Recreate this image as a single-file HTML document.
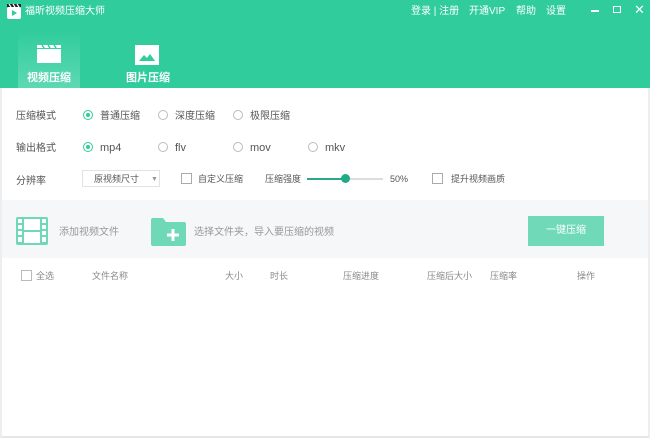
<!DOCTYPE html>
<html><head><meta charset="utf-8"><style>
*{margin:0;padding:0;box-sizing:border-box}
body{width:650px;height:438px;overflow:hidden;background:#fff;font-family:"Liberation Sans","Noto Sans CJK SC",sans-serif;font-size:10px;color:#555;position:relative}
.top{position:absolute;left:0;top:0;width:650px;height:88px;background:#30cc9b}
.a{position:absolute;white-space:nowrap;line-height:1}
.w{color:#fff}
.tab{position:absolute;top:30px;width:62px;height:58px}
.radio{position:absolute;width:10px;height:10px;border:1px solid #bbb;border-radius:50%}
.radio.on{border-color:#30cc9b}
.radio.on::after{content:"";position:absolute;left:2px;top:2px;width:4px;height:4px;border-radius:50%;background:#30cc9b}
.cb{position:absolute;width:11px;height:11px;border:1px solid #aaa;background:#fff}
.frame{position:absolute;left:0;top:88px;width:650px;height:350px;border-left:2px solid #eee;border-right:2px solid #eee;border-bottom:2px solid #e6e6e6}
</style></head><body>
<div class="top"></div>
<div class="frame"></div>
<svg class="a" style="left:6px;top:3px" width="16" height="16" viewBox="0 0 16 16"><rect x="1" y="4" width="14" height="12" rx="2" fill="#fff"/><rect x="1" y="1" width="14" height="3" fill="#222"/><path d="M3 1l2 3M7 1l2 3M11 1l2 3" stroke="#fff" stroke-width="1.2"/><path d="M6 7l5 3-5 3z" fill="#30cc9b"/></svg>
<div class="a w" style="left:25px;top:7px;font-size:10px">福昕视频压缩大师</div>
<div class="a w" style="left:411px;top:7px;font-size:10px">登录 | 注册</div>
<div class="a w" style="left:469px;top:7px;font-size:10px">开通VIP</div>
<div class="a w" style="left:516px;top:7px;font-size:10px">帮助</div>
<div class="a w" style="left:546px;top:7px;font-size:10px">设置</div>
<div class="a" style="left:591px;top:10px;width:8px;height:1.5px;background:#fff"></div>
<div class="a" style="left:613px;top:6px;width:8px;height:7px;border:1.5px solid #fff"></div>
<div class="a w" style="left:634px;top:3px;font-size:13px">✕</div>
<div class="tab" style="left:18px;background:linear-gradient(#30cc9b,#5dd9b2)"></div>
<svg class="a" style="left:36px;top:44px" width="26" height="20" viewBox="0 0 26 20"><rect x="1" y="5" width="24" height="14" fill="#fff"/><path d="M1 1h24v3H1z" fill="#fff"/><path d="M6 1l2 3M12 1l2 3M18 1l2 3" stroke="#30cc9b" stroke-width="1.5"/></svg>
<div class="a w" style="left:27px;top:73px;font-size:11px;font-weight:bold">视频压缩</div>
<svg class="a" style="left:134px;top:44px" width="26" height="22" viewBox="0 0 26 22"><rect x="1" y="1" width="24" height="20" fill="#fff"/><path d="M5 17l5-6 3 3 3-4 5 7z" fill="#30cc9b"/></svg>
<div class="a w" style="left:126px;top:73px;font-size:11px;font-weight:bold">图片压缩</div>

<div class="a" style="left:16px;top:112px">压缩模式</div>
<div class="radio on" style="left:83px;top:110px"></div><div class="a" style="left:100px;top:112px">普通压缩</div>
<div class="radio" style="left:158px;top:110px"></div><div class="a" style="left:175px;top:112px">深度压缩</div>
<div class="radio" style="left:233px;top:110px"></div><div class="a" style="left:250px;top:112px">极限压缩</div>

<div class="a" style="left:16px;top:144px">输出格式</div>
<div class="radio on" style="left:83px;top:142px"></div><div class="a" style="left:100px;top:143px;font-size:11px">mp4</div>
<div class="radio" style="left:158px;top:142px"></div><div class="a" style="left:175px;top:143px;font-size:11px">flv</div>
<div class="radio" style="left:233px;top:142px"></div><div class="a" style="left:250px;top:143px;font-size:11px">mov</div>
<div class="radio" style="left:308px;top:142px"></div><div class="a" style="left:325px;top:143px;font-size:11px">mkv</div>

<div class="a" style="left:16px;top:177px">分辨率</div>
<div class="a" style="left:82px;top:170px;width:78px;height:17px;border:1px solid #e2e2e2"></div>
<div class="a" style="left:94px;top:175px;font-size:9px">原视频尺寸</div>
<div class="a" style="left:151px;top:176px;font-size:7px;color:#999">▼</div>
<div class="cb" style="left:181px;top:173px"></div><div class="a" style="left:198px;top:175px;font-size:9px">自定义压缩</div>
<div class="a" style="left:265px;top:175px;font-size:9px">压缩强度</div>
<div class="a" style="left:307px;top:178px;width:76px;height:2px;background:#ddd"></div>
<div class="a" style="left:307px;top:178px;width:38px;height:2px;background:#2aa98a"></div>
<div class="a" style="left:341px;top:174px;width:9px;height:9px;border-radius:50%;background:#1fab85"></div>
<div class="a" style="left:390px;top:175px;font-size:9px">50%</div>
<div class="cb" style="left:432px;top:173px"></div><div class="a" style="left:451px;top:175px;font-size:9px">提升视频画质</div>

<div class="a" style="left:2px;top:200px;width:646px;height:58px;background:#f5f7f8"></div>
<svg class="a" style="left:15px;top:216px" width="34" height="30" viewBox="0 0 34 30"><rect x="1" y="1" width="32" height="28" rx="2" fill="#6fd8b6"/><rect x="9" y="3" width="16" height="11" fill="#fff"/><rect x="9" y="16" width="16" height="11" fill="#fff"/><g fill="#fff"><rect x="3" y="3" width="4" height="4"/><rect x="3" y="9" width="4" height="4"/><rect x="3" y="15" width="4" height="4"/><rect x="3" y="21" width="4" height="5"/><rect x="27" y="3" width="4" height="4"/><rect x="27" y="9" width="4" height="4"/><rect x="27" y="15" width="4" height="4"/><rect x="27" y="21" width="4" height="5"/></g></svg>
<div class="a" style="left:59px;top:228px;color:#999">添加视频文件</div>
<svg class="a" style="left:151px;top:217px" width="35" height="29" viewBox="0 0 35 29"><path d="M0 3a2 2 0 012-2h10l3 4h18a2 2 0 012 2v20a2 2 0 01-2 2H2a2 2 0 01-2-2z" fill="#6fd8b6"/><path d="M22 12v12M16 18h12" stroke="#fff" stroke-width="3"/></svg>
<div class="a" style="left:194px;top:228px;color:#999">选择文件夹，导入要压缩的视频</div>
<div class="a" style="left:528px;top:216px;width:76px;height:30px;background:#6fd9b8;color:#fff;text-align:center;line-height:30px">一键压缩</div>

<div class="cb" style="left:21px;top:270px;border-color:#bbb"></div>
<div class="a" style="left:36px;top:272px;font-size:9px;color:#888">全选</div>
<div class="a" style="left:92px;top:272px;font-size:9px;color:#888">文件名称</div>
<div class="a" style="left:225px;top:272px;font-size:9px;color:#888">大小</div>
<div class="a" style="left:270px;top:272px;font-size:9px;color:#888">时长</div>
<div class="a" style="left:343px;top:272px;font-size:9px;color:#888">压缩进度</div>
<div class="a" style="left:427px;top:272px;font-size:9px;color:#888">压缩后大小</div>
<div class="a" style="left:490px;top:272px;font-size:9px;color:#888">压缩率</div>
<div class="a" style="left:577px;top:272px;font-size:9px;color:#888">操作</div>
</body></html>
